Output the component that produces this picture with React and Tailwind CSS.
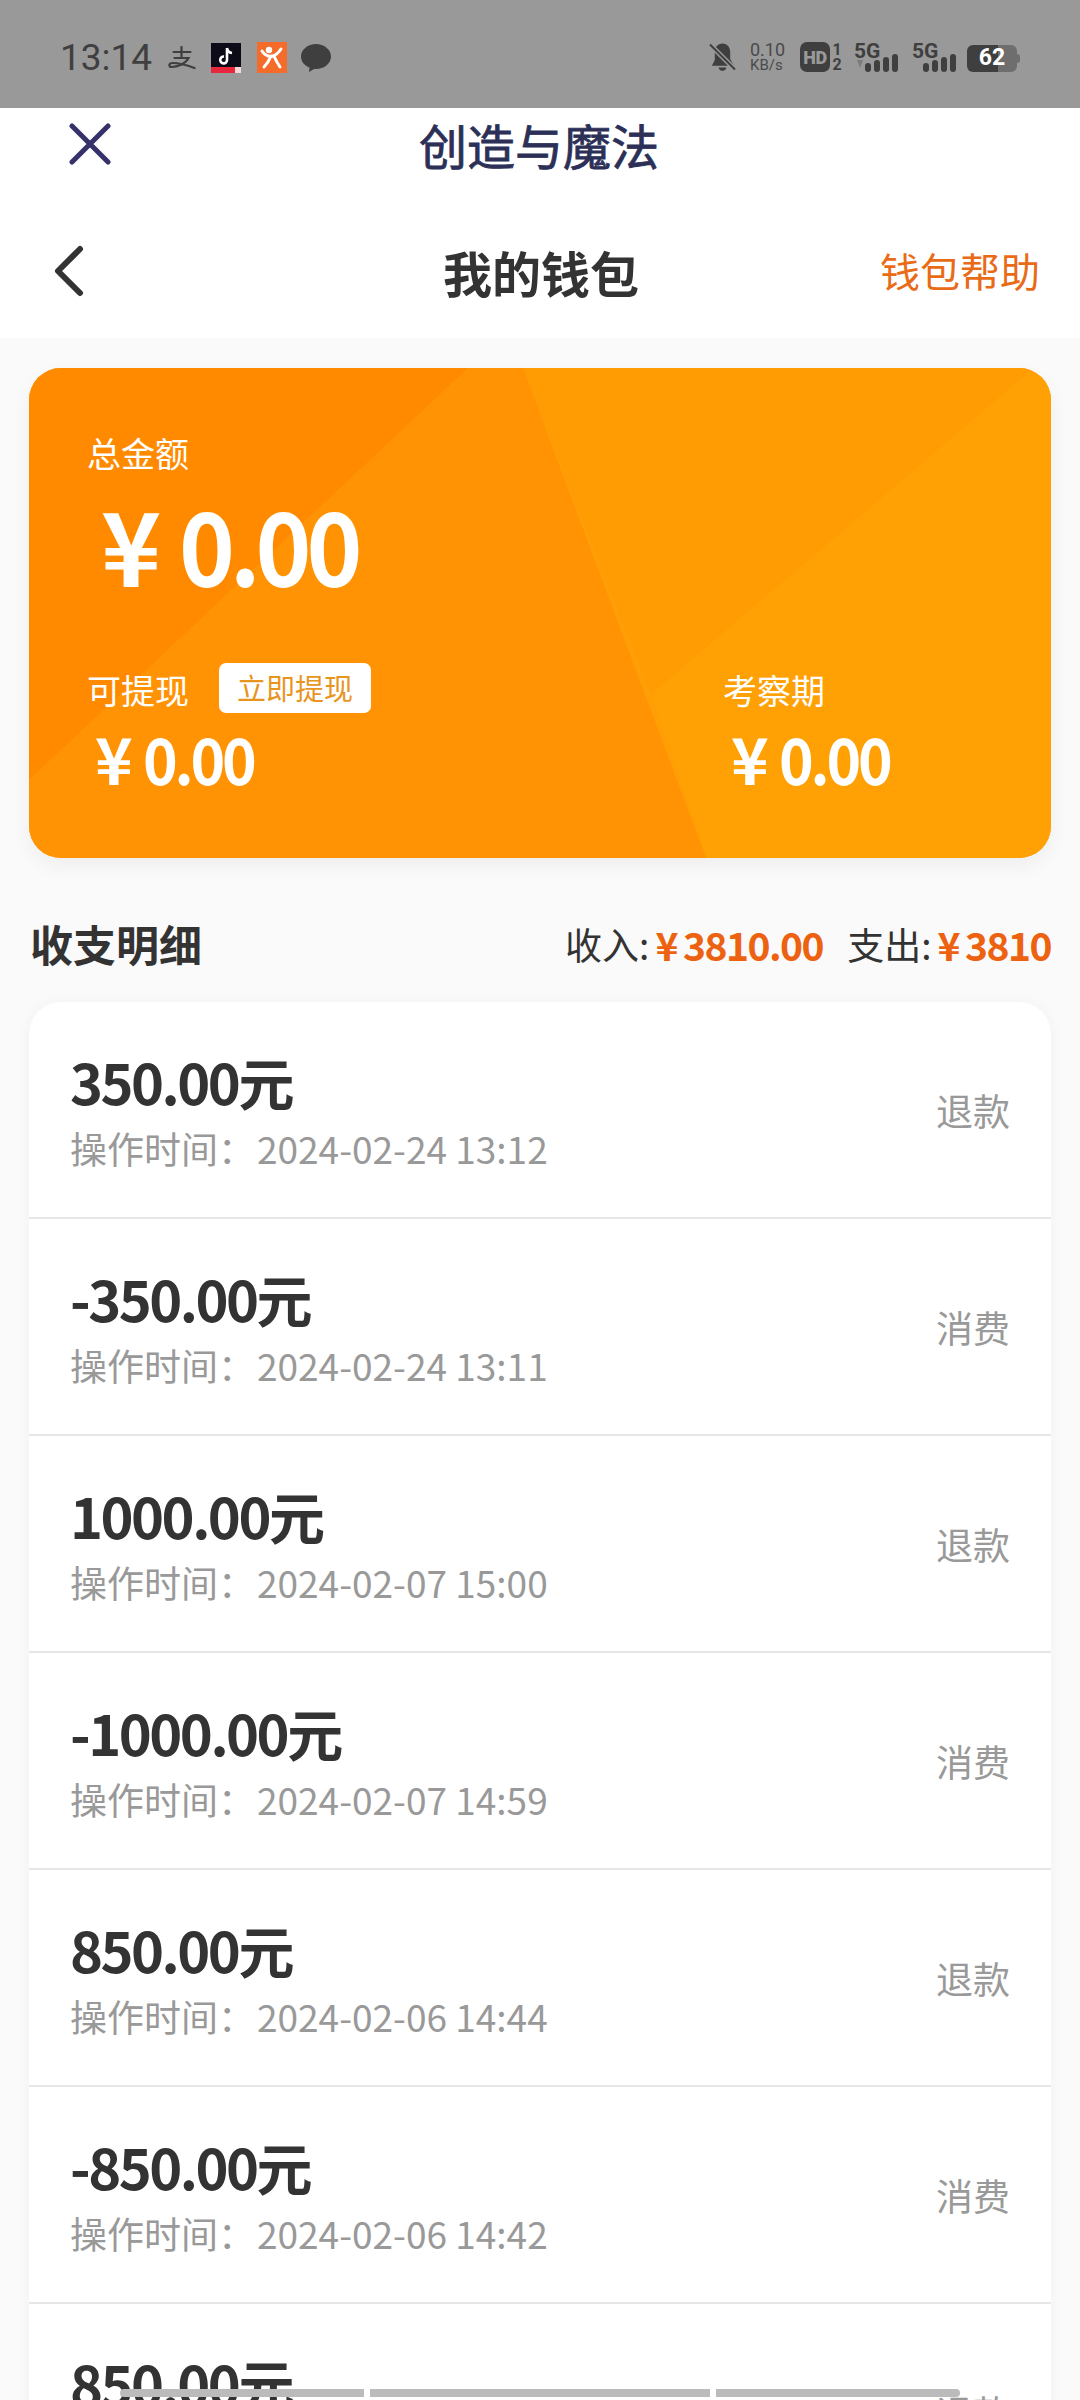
const FONT = "font-['Noto_Sans_CJK_SC','Noto_Sans',sans-serif]";

const records = [
  { amount: '350.00元', time: '2024-02-24 13:12', type: '退款' },
  { amount: '-350.00元', time: '2024-02-24 13:11', type: '消费' },
  { amount: '1000.00元', time: '2024-02-07 15:00', type: '退款' },
  { amount: '-1000.00元', time: '2024-02-07 14:59', type: '消费' },
  { amount: '850.00元', time: '2024-02-06 14:44', type: '退款' },
  { amount: '-850.00元', time: '2024-02-06 14:42', type: '消费' },
  { amount: '850.00元', time: '2024-02-06 14:40', type: '退款' },
];

function SignalBars({ arrow }) {
  return (
    <svg width="44" height="18" viewBox="0 0 44 18" fill="#3f3f3f">
      {arrow && <path d="M3 6h6l-3 8z" fill="#7c7c7c" />}
      <rect x="11" y="9" width="6" height="9" rx="3" />
      <rect x="20" y="6" width="6" height="12" rx="3" />
      <rect x="29" y="3" width="6" height="15" rx="3" />
      <rect x="38" y="0" width="6" height="18" rx="3" />
    </svg>
  );
}

function Network({ arrow }) {
  return (
    <div className="flex w-[44px] flex-col">
      <span className="font-['Roboto'] text-[21px] leading-[18px] font-bold text-[#3f3f3f]">5G</span>
      <div className="mt-[-6px] flex justify-end">
        <SignalBars arrow={arrow} />
      </div>
    </div>
  );
}

function StatusBar() {
  return (
    <div className="flex h-[108px] items-start justify-between bg-[#999999] pt-[42px] pr-[60px] pl-[60px] text-[#3f3f3f]">
      <div className="flex items-center">
        <span className="font-['Roboto'] text-[37px] leading-[30px]">13:14</span>
        <svg className="ml-[16px]" width="29" height="24" viewBox="0 0 28 24" fill="none" stroke="#3f3f3f" strokeWidth="2.2" strokeLinecap="round">
          <path d="M5 6h17M13 1v11M6 12h14C17 18 9 21 3 21c-3 0-3-4 1-4 6 0 14 2 22 5" />
        </svg>
        <svg className="ml-[14px]" width="30" height="30" viewBox="0 0 30 30">
          <rect width="30" height="30" fill="#0d0b18" />
          <path d="M16 5v12a3.4 3.4 0 1 1-3-3.4M16 5c.4 3 2.400 4.600 5 5" fill="none" stroke="#fff" strokeWidth="2.600" />
          <rect y="24" width="24" height="6" fill="#e8263c" />
          <rect x="24" y="24" width="6" height="6" fill="#f3d9d9" />
        </svg>
        <svg className="ml-[16px]" width="30" height="31" viewBox="0 0 30 31">
          <rect width="30" height="31" fill="#f46b2a" />
          <circle cx="12" cy="8" r="3.200" fill="#fff" />
          <path d="M5 9c3 5 8 6 11 5 3-1 6-4 8-7M14 14c-2 5-4 8-7 11M17 14c2 5 4 8 6 11" fill="none" stroke="#fff" strokeWidth="3" strokeLinecap="round" />
        </svg>
        <svg className="ml-[14px]" width="30" height="30" viewBox="0 0 30 30" fill="#3f3f3f">
          <path d="M15 1c8 0 15 5.500 15 12.500S23 26 15 26h-2l-5 3 .5-4.500C3.500 22.500 0 18.500 0 13.500 0 6.500 7 1 15 1z" />
        </svg>
      </div>
      <div className="flex items-start">
        <svg width="27" height="30" viewBox="0 0 28 30" fill="#3f3f3f">
          <path d="M14 1c5 0 8 4 8 9v7l4 7H3l3-6v-8c0-5 3-9 8-9zM10 26h8c0 2-2 3.500-4 3.500S10 28 10 26z" />
          <path d="M1 2l26 26" stroke="#999999" strokeWidth="5" />
          <path d="M1 2l26 26" stroke="#3f3f3f" strokeWidth="2" />
        </svg>
        <div className="ml-[14px] flex w-[36px] flex-col font-['Roboto'] text-[#4a4a4a]">
          <span className="text-[18px] leading-[16px]">0.10</span>
          <span className="text-[15px] leading-[15px]">KB/s</span>
        </div>
        <div className="ml-[14px] flex h-[30px] w-[30px] items-center justify-center rounded-[7px] bg-[#3f3f3f] font-['Roboto'] text-[18px] font-black tracking-[-0.5px] text-[#999999]">
          HD
        </div>
        <div className="ml-[1px] flex w-[12px] flex-col items-center font-['Roboto'] text-[16px] leading-[15px] font-bold">
          <span>1</span>
          <span>2</span>
        </div>
        <div className="ml-[11px]">
          <Network arrow />
        </div>
        <div className="ml-[14px]">
          <Network />
        </div>
        <div className="mt-[3px] ml-[11px] flex h-[27px] items-center">
          <div className="flex h-[27px] w-[50px] items-center justify-center rounded-[6px] bg-[linear-gradient(90deg,#3f3f3f_62%,#6e6e6e_62%)] font-['Roboto'] text-[23px] font-bold text-white">
            62
          </div>
          <div className="h-[9px] w-[3px] rounded-r bg-[#6e6e6e]" />
        </div>
      </div>
    </div>
  );
}

function Header() {
  return (
    <div className="bg-white">
      <div className="relative flex h-[76px] items-center justify-center pr-[2px] pb-[4px]">
        <svg className="absolute top-[15px] left-[69px]" width="42" height="42" viewBox="0 0 42 42" fill="none" stroke="#35316a" strokeWidth="5" strokeLinecap="round">
          <path d="M3 3l36 36M39 3L3 39" />
        </svg>
        <span className="text-[48px] leading-none text-[#2c3057] [-webkit-text-stroke:0.8px]">创造与魔法</span>
      </div>
      <div className="flex h-[154px] items-center justify-between pt-[20px] pr-[40px] pl-[53px]">
        <svg width="31" height="52" viewBox="0 0 31 52" fill="none" stroke="#333333" strokeWidth="6" strokeLinecap="round" strokeLinejoin="round">
          <path d="M27 4L5 26l22 22" />
        </svg>
        <span className="ml-[118px] text-[49px] leading-none font-bold text-[#333333]">我的钱包</span>
        <span className="mt-[-2px] text-[40px] leading-none text-[#e96b17]">钱包帮助</span>
      </div>
    </div>
  );
}

function SmallMoney() {
  return (
    <div className="mt-[12px] ml-[8px] text-[64px] leading-none font-bold tracking-[-3.5px]">
      <span className="mr-[14px]">¥</span>
      <span className="inline-block origin-left scale-x-[0.92]">0.00</span>
    </div>
  );
}

function WalletCard() {
  return (
    <div className="relative mx-[29px] mt-[30px] h-[490px] overflow-hidden rounded-[32px] bg-[#ff9e05] shadow-[0_8px_20px_rgba(0,0,0,0.05)]">
      <svg className="absolute inset-0" width="1022" height="490" viewBox="0 0 1022 490">
        <polygon points="1022,0 1022,490 677,490 622,326 1004,0" fill="#ffa005" />
        <polygon points="494,0 1004,0 622,326" fill="#ff9b03" />
        <polygon points="439,0 494,0 677,490 0,490 0,412" fill="#ff9304" />
        <polygon points="0,0 439,0 0,412" fill="#ff8a00" />
      </svg>
      <div className="relative flex h-full flex-col pt-[68px] pl-[58px] text-white">
        <div className="text-[34px] leading-none">总金额</div>
        <div className="mt-[22px] ml-[14px] text-[102px] leading-none font-bold tracking-[-5.5px]">
          <span className="mr-[23px]">¥</span>
          <span className="inline-block origin-left scale-x-[0.93]">0.00</span>
        </div>
        <div className="mt-[69px] flex">
          <div className="w-[636px]">
            <div className="flex h-[50px] items-center">
              <span className="mt-[3px] text-[34px] leading-none">可提现</span>
              <span className="ml-[30px] flex h-[50px] w-[152px] items-center justify-center rounded-[7px] bg-white text-[29px] text-[#e8951f]">立即提现</span>
            </div>
            <SmallMoney />
          </div>
          <div>
            <div className="flex h-[50px] items-center">
              <span className="mt-[3px] text-[34px] leading-none">考察期</span>
            </div>
            <SmallMoney />
          </div>
        </div>
      </div>
    </div>
  );
}

function Summary() {
  return (
    <div className="mt-[56px] flex h-[88px] items-start justify-between pr-[29px] pl-[30px]">
      <span className="mt-[-3px] text-[43px] leading-[64px] font-bold text-[#333333]">收支明细</span>
      <div className="flex text-[37px] leading-[60px] text-[#333333]">
        <span>收入:</span>
        <span className="ml-[6px] text-[39px] font-bold tracking-[-1.5px] text-[#ec6210]"><span className="mr-[6px]">¥</span>3810.00</span>
        <span className="ml-[24px]">支出:</span>
        <span className="ml-[6px] text-[39px] font-bold tracking-[-1.5px] text-[#ec6210]"><span className="mr-[6px]">¥</span>3810</span>
      </div>
    </div>
  );
}

function RecordRow({ item }) {
  return (
    <div className="flex h-[217px] shrink-0 items-start justify-between border-b-2 border-[#e6e6e6] pt-[45px] pr-[41px] pl-[41px]">
      <div className="flex flex-col">
        <span className="text-[56px] leading-[68px] font-bold tracking-[-2.5px] text-[#333333]">{item.amount}</span>
        <span className="mt-[10px] text-[37px] leading-[46px] text-[#999999]">操作时间：<span className="ml-[2px]">{item.time}</span></span>
      </div>
      <span className="mt-[40px] text-[37px] leading-[46px] text-[#999999]">{item.type}</span>
    </div>
  );
}

export default function App() {
  return (
    <div className={`relative h-[2400px] w-[1080px] overflow-hidden bg-[#fafafa] ${FONT}`}>
      <StatusBar />
      <Header />
      <WalletCard />
      <Summary />
      <div className="mx-[29px] flex flex-col overflow-hidden rounded-t-[32px] bg-white shadow-[0_0_14px_rgba(0,0,0,0.04)]">
        {records.map((item, i) => (
          <RecordRow key={i} item={item} />
        ))}
      </div>
      {/* gesture hint bar lying over the list */}
      <div className="absolute top-[2389px] left-[120px] flex h-[8px] w-[840px] gap-[6px]">
        <div className="w-[244px] rounded-l-full bg-[#bbbbbb]" />
        <div className="w-[340px] bg-[#bbbbbb]" />
        <div className="flex-1 rounded-r-full bg-[#bbbbbb]" />
      </div>
    </div>
  );
}
